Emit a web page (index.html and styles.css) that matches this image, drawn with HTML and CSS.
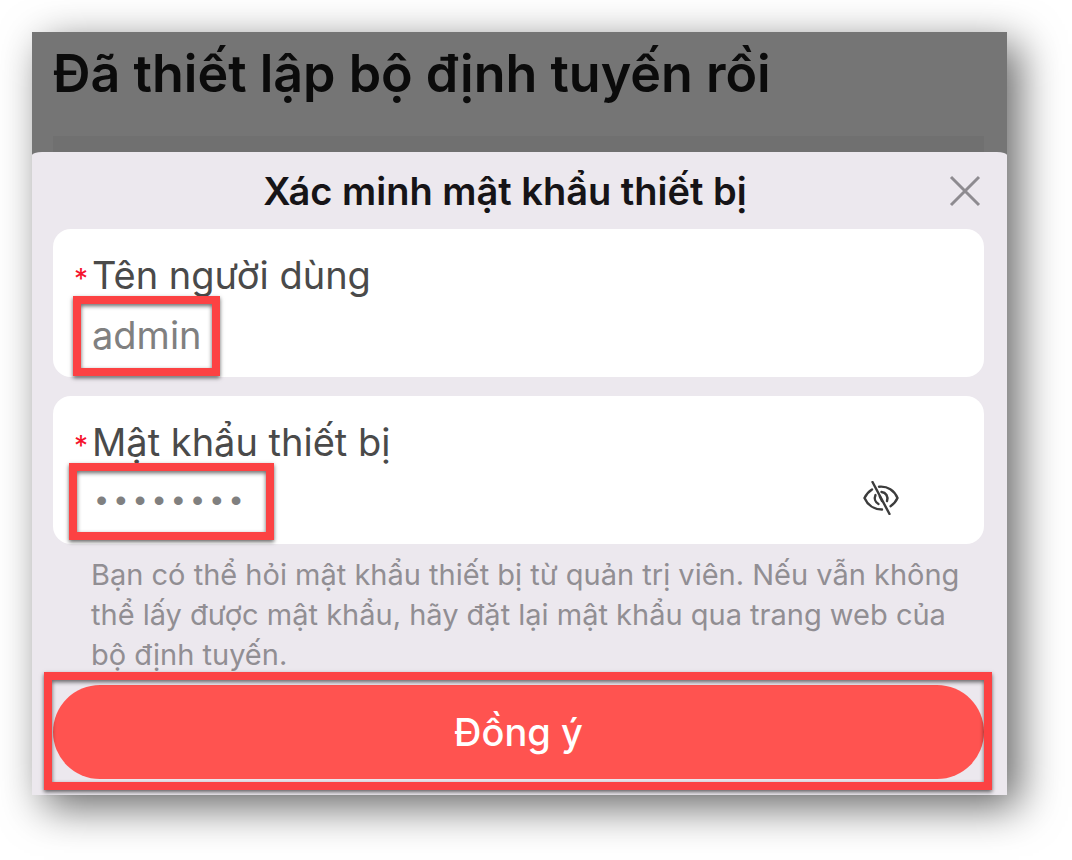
FILE: index.html
```
<!DOCTYPE html>
<html lang="vi">
<head>
  <meta charset="UTF-8">
  <meta name="viewport" content="width=device-width, initial-scale=1">
  <title>Xác minh mật khẩu thiết bị</title>
  <link rel="stylesheet" href="styles.css">
</head>
<body>
  <main class="screen">
    <header class="backdrop">
      <h1>Đã thiết lập bộ định tuyến rồi</h1>
      <div class="backdrop-card"></div>
    </header>

    <form class="sheet">
      <div class="sheet-header">
        <h2>Xác minh mật khẩu thiết bị</h2>
        <button type="button" class="close" aria-label="Đóng">
          <svg viewBox="0 0 32 32" width="32" height="32" fill="none" stroke="#8e8b90" stroke-width="3">
            <path d="M2 2L30 30M30 2L2 30"/>
          </svg>
        </button>
      </div>

      <!-- Username -->
      <div class="field">
        <label for="username"><span class="required">*</span>Tên người dùng</label>
        <input type="text" id="username" name="username" value="admin">
        <span class="highlight highlight-user"></span>
      </div>

      <!-- Password -->
      <div class="field">
        <label for="password"><span class="required">*</span>Mật khẩu thiết bị</label>
        <div class="password-row">
          <input type="password" id="password" name="password" value="password">
          <button type="button" class="toggle" aria-label="Hiện mật khẩu">
            <svg viewBox="0 0 36 34" width="36" height="34" fill="none" stroke="#3c3c3c" stroke-width="2.400" stroke-linecap="round">
              <path d="M9 8.500C5.500 10.700 3 13.800 1.500 17C4.500 24 11 28.500 19 28.500"/>
              <path d="M16 5.700C24.500 4.800 31.500 9.500 34.500 17C33.200 20 30.800 23 27.500 25.200"/>
              <path d="M12.500 14C11 17.500 12.200 21.300 15.500 23"/>
              <path d="M18.500 11C23 11.500 25.500 15.500 24 20"/>
              <path d="M16.800 15.500L19 20"/>
              <path d="M9.500 1L26.500 33"/>
            </svg>
          </button>
        </div>
        <span class="highlight highlight-pass"></span>
      </div>

      <p class="hint">Bạn có thể hỏi mật khẩu thiết bị từ quản trị viên. Nếu vẫn không thể lấy được mật khẩu, hãy đặt lại mật khẩu qua trang web của bộ định tuyến.</p>

      <div class="actions">
        <button type="submit" class="submit">Đồng ý</button>
        <span class="highlight highlight-submit"></span>
      </div>
    </form>
  </main>
</body>
</html>
```
FILE: styles.css
```
* {
  box-sizing: border-box;
}
body {
  margin: 0;
  padding: 32px 65px 65px 32px;
  background: #fff;
  font-family: Inter, "Noto Sans", sans-serif;
}
.screen {
  background: #757575;
  box-shadow: 12px 12px 40px rgba(0,0,0,0.6);
}
.backdrop {
  display: flex;
  flex-direction: column;
  height: 120px;
  padding: 12px 23px 0 21px;
}
h1 {
  margin: 0;
  font-size: 52px;
  line-height: 60px;
  font-weight: 600;
  color: #0b0b0b;
  white-space: nowrap;
}
.backdrop-card {
  margin-top: auto;
  height: 16px;
  background: #707070;
}
.sheet {
  padding: 0 23px 16px 21px;
  background: #ece8ee;
  border-radius: 10px 10px 0 0 / 3px 3px 0 0;
}
.sheet-header {
  display: flex;
  align-items: center;
  height: 77px;
}
h2 {
  flex: 1;
  margin: 0;
  padding-left: 8px;
  text-align: center;
  font-size: 38px;
  line-height: 44px;
  font-weight: 600;
  color: #161417;
}
button {
  padding: 0;
  border: none;
  background: none;
  font-family: inherit;
  cursor: pointer;
}
.close,
.toggle {
  display: flex;
}
.close {
  margin-right: 3px;
}
.field {
  position: relative;
  height: 148px;
  margin-bottom: 19px;
  padding: 24px 85px 0 21px;
  background: #fff;
  border-radius: 18px;
}
label {
  display: flex;
  align-items: center;
  font-size: 38px;
  line-height: 44px;
  color: #4a4a4a;
}
.required {
  width: 18px;
  padding-top: 8px;
  font-size: 28px;
  line-height: 36px;
  color: #f5122d;
}
input {
  display: block;
  width: 100%;
  height: 60px;
  margin-top: 8px;
  padding: 0 0 0 18px;
  border: none;
  outline: none;
  background: none;
  font-family: inherit;
  font-size: 38px;
  color: #808080;
}
input[type="password"] {
  font-family: "Liberation Mono", monospace;
  font-size: 32px;
}
.password-row {
  display: flex;
  align-items: center;
}
.highlight {
  position: absolute;
  border: 8px solid #fc4243;
  box-shadow: 0 2px 4px rgba(0,0,0,0.6), inset 0 2px 4px rgba(0,0,0,0.6);
  pointer-events: none;
}
.highlight-user {
  left: 20px;
  bottom: 1px;
  width: 147px;
  height: 80px;
}
.highlight-pass {
  left: 16px;
  bottom: 4px;
  width: 205px;
  height: 77px;
}
.hint {
  margin: -8px 0 10px;
  padding: 0 20px 0 38px;
  font-size: 29px;
  line-height: 40px;
  color: #918e93;
}
.actions {
  position: relative;
}
.submit {
  display: block;
  width: 100%;
  height: 94px;
  border-radius: 47px;
  background: #ff5350;
  color: #fff;
  font-size: 38px;
  font-weight: 500;
}
.highlight-submit {
  top: -13px;
  right: -8px;
  bottom: -11px;
  left: -9px;
}
```
